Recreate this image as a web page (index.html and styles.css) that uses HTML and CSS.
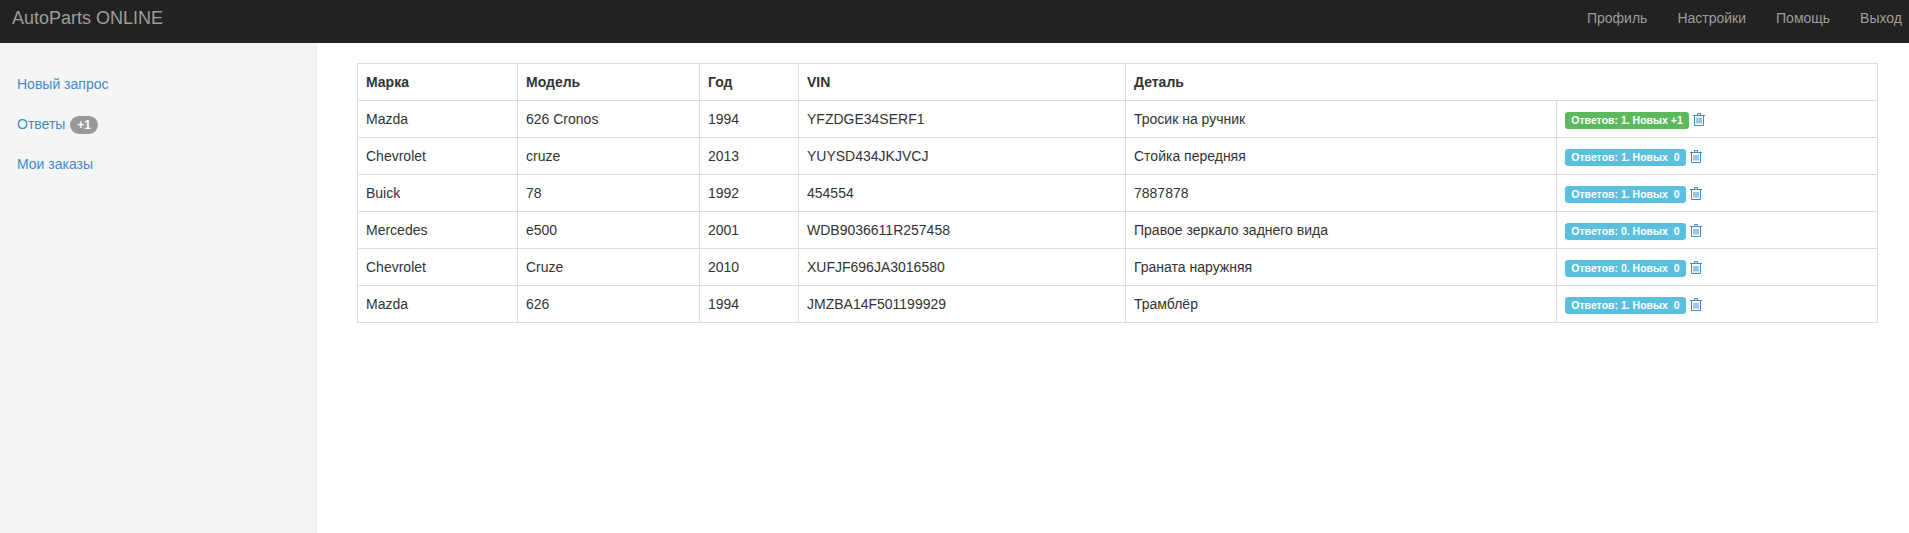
FILE: index.html
```html
<!DOCTYPE html>
<html lang="ru">
<head>
<meta charset="utf-8">
<title>AutoParts ONLINE</title>
<link rel="stylesheet" href="styles.css">
</head>
<body>
<svg class="defs" width="0" height="0" aria-hidden="true"><defs>
<symbol id="trash" viewBox="0 0 12 13"><path d="M4.500 2V.5h3V2M0 2.500h12M1.500 2.500v10h9v-10M4 5v5.500M6 5v5.500M8 5v5.500" fill="none" stroke="currentColor" stroke-width="1"/></symbol>
</defs></svg>
<nav class="navbar">
  <a class="brand" href="#">AutoParts ONLINE</a>
  <ul class="topnav">
    <li><a href="#">Профиль</a></li>
    <li><a href="#">Настройки</a></li>
    <li><a href="#">Помощь</a></li>
    <li><a href="#">Выход</a></li>
  </ul>
</nav>
<div class="layout">
  <aside class="sidebar">
    <ul class="sidenav">
      <li><a href="#">Новый запрос</a></li>
      <li><a href="#">Ответы</a> <span class="badge">+1</span></li>
      <li><a href="#">Мои заказы</a></li>
    </ul>
  </aside>
  <main class="main">
    <table class="table">
      <colgroup>
        <col class="c1"><col class="c2"><col class="c3"><col class="c4"><col class="c5"><col class="c6">
      </colgroup>
      <thead>
        <tr><th>Марка</th><th>Модель</th><th>Год</th><th>VIN</th><th colspan="2">Деталь</th></tr>
      </thead>
      <tbody>
        <tr><td>Mazda</td><td>626 Cronos</td><td>1994</td><td>YFZDGE34SERF1</td><td>Тросик на ручник</td>
          <td><span class="label success">Ответов: 1. Новых +1</span><svg class="trash"><use href="#trash"/></svg></td></tr>
        <tr><td>Chevrolet</td><td>cruze</td><td>2013</td><td>YUYSD434JKJVCJ</td><td>Стойка передняя</td>
          <td><span class="label info">Ответов: 1. Новых &nbsp;0</span><svg class="trash"><use href="#trash"/></svg></td></tr>
        <tr><td>Buick</td><td>78</td><td>1992</td><td>454554</td><td>7887878</td>
          <td><span class="label info">Ответов: 1. Новых &nbsp;0</span><svg class="trash"><use href="#trash"/></svg></td></tr>
        <tr><td>Mercedes</td><td>e500</td><td>2001</td><td>WDB9036611R257458</td><td>Правое зеркало заднего вида</td>
          <td><span class="label info">Ответов: 0. Новых &nbsp;0</span><svg class="trash"><use href="#trash"/></svg></td></tr>
        <tr><td>Chevrolet</td><td>Cruze</td><td>2010</td><td>XUFJF696JA3016580</td><td>Граната наружняя</td>
          <td><span class="label info">Ответов: 0. Новых &nbsp;0</span><svg class="trash"><use href="#trash"/></svg></td></tr>
        <tr><td>Mazda</td><td>626</td><td>1994</td><td>JMZBA14F501199929</td><td>Трамблёр</td>
          <td><span class="label info">Ответов: 1. Новых &nbsp;0</span><svg class="trash"><use href="#trash"/></svg></td></tr>
      </tbody>
    </table>
  </main>
</div>
</body>
</html>
```
FILE: styles.css
```css
* { box-sizing: border-box; }
html, body { height: 100%; }
body {
  margin: 0;
  font-family: "Liberation Sans", Arial, sans-serif;
  font-size: 14px;
  line-height: 20px;
  color: #333;
  background: #fff;
  overflow: hidden;
  display: flex;
  flex-direction: column;
}
a { color: #428bca; text-decoration: none; }
ul { list-style: none; margin: 0; padding: 0; }
.defs { display: block; height: 0; }

.navbar {
  flex: none;
  height: 43px;
  background: #222;
  display: flex;
  justify-content: space-between;
  padding: 0 7px 0 12px;
}
.brand { font-size: 18px; line-height: 36px; color: #9d9d9d; }
.topnav { display: flex; gap: 30px; }
.topnav a { color: #9d9d9d; line-height: 36px; display: block; }

.layout { flex: 1; display: flex; min-height: 0; }
.sidebar {
  flex: none;
  width: 317px;
  background: #f5f5f5;
  border-right: 1px solid #eee;
  padding: 21px 0 0 17px;
}
.sidenav li { height: 40px; line-height: 40px; }
.badge {
  display: inline-block;
  min-width: 10px;
  padding: 3px 7px;
  margin-left: 1px;
  font-size: 12px;
  font-weight: bold;
  line-height: 12px;
  color: #fff;
  background: #999;
  border-radius: 10px;
  vertical-align: baseline;
}

.main { flex: 1; padding: 20px 32px 0 40px; min-width: 0; }
.table { width: 1520px; table-layout: fixed; border-collapse: collapse; border: 1px solid #ddd; }
.c1 { width: 160px; } .c2 { width: 182px; } .c3 { width: 99px; }
.c4 { width: 327px; } .c5 { width: 431px; } .c6 { width: 321px; }
th, td { border: 1px solid #ddd; padding: 8px; height: 37px; text-align: left; vertical-align: top; line-height: 20px; }
th { font-weight: bold; }

.label {
  display: inline;
  padding: 2.1px 6.3px 3.15px;
  font-size: 10.5px;
  font-weight: bold;
  line-height: 1;
  color: #fff;
  border-radius: 3.15px;
  white-space: nowrap;
  vertical-align: baseline;
}
.success { background: #5cb85c; }
.info { background: #5bc0de; }
.trash { width: 12px; height: 13px; margin-left: 4px; color: #428bca; vertical-align: -2px; }
```
